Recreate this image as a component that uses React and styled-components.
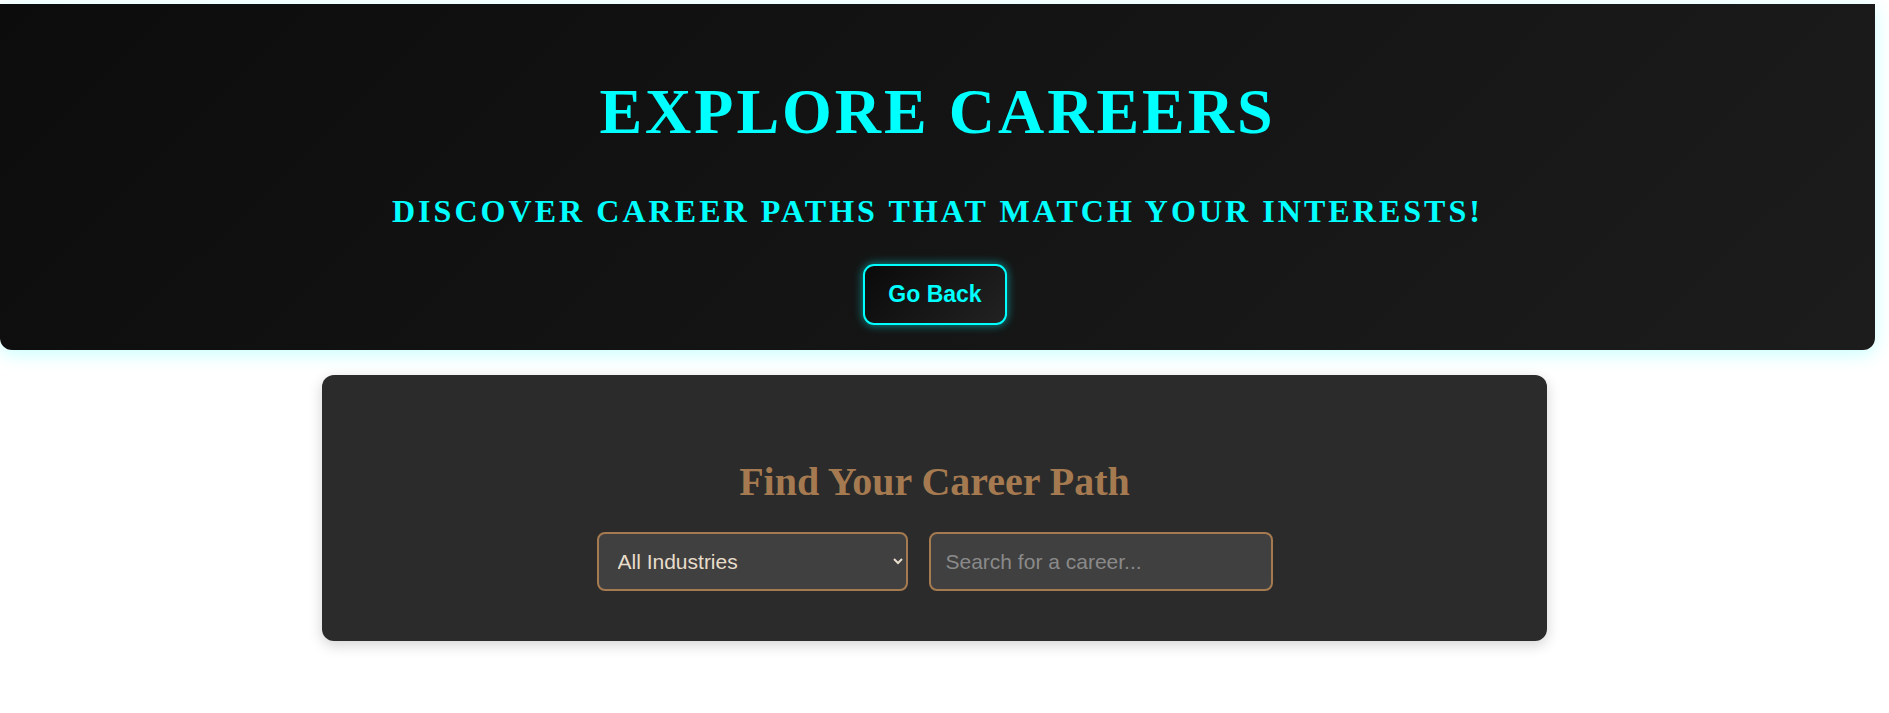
import React from "react";
import styled, { createGlobalStyle } from "styled-components";

const GlobalStyle = createGlobalStyle`
  * {
    box-sizing: border-box;
  }

  body {
    margin: 0;
    background: #ffffff;
    font-family: "Liberation Serif", "Times New Roman", serif;
  }
`;

const Page = styled.div`
  min-height: 100vh;
  padding: 4px 14px 40px 0;
  display: flex;
  flex-direction: column;
  align-items: center;
  gap: 25px;
`;

// Hero header
const Header = styled.header`
  width: 100%;
  height: 346px;
  padding-top: 71px;
  display: flex;
  flex-direction: column;
  align-items: center;
  background: linear-gradient(135deg, #0c0c0c 0%, #1c1c1c 100%);
  border-radius: 0 0 12px 12px;
  box-shadow: 0 4px 18px rgba(0, 255, 255, 0.22);
`;

const Title = styled.h1`
  margin: 0;
  font-family: "Liberation Serif", "Times New Roman", serif;
  font-size: 64px;
  font-weight: 700;
  letter-spacing: 3px;
  color: #00ffff;
  text-transform: uppercase;
`;

const Subtitle = styled.h2`
  margin: 44px 0 0;
  font-family: "Liberation Serif", "Times New Roman", serif;
  font-size: 32px;
  font-weight: 700;
  letter-spacing: 3.05px;
  color: #00ffff;
  text-transform: uppercase;
`;

const BackButton = styled.button`
  margin: 34px 5px 0 0;
  padding: 15px 23px;
  font-family: "Liberation Sans", Arial, sans-serif;
  font-size: 23px;
  font-weight: 700;
  color: #00ffff;
  background: linear-gradient(135deg, #0a0a0a, #222222);
  border: 2px solid #00ffff;
  border-radius: 11px;
  box-shadow: 0 0 10px rgba(0, 255, 255, 0.55);
  cursor: pointer;
`;

// Search card
const Card = styled.section`
  width: 1225px;
  height: 266px;
  margin-right: 6px;
  padding-top: 83px;
  display: flex;
  flex-direction: column;
  align-items: center;
  background: #2b2b2b;
  border-radius: 12px;
  box-shadow: 0 4px 14px rgba(0, 0, 0, 0.18);
`;

const CardTitle = styled.h2`
  margin: 0;
  font-family: "Liberation Serif", "Times New Roman", serif;
  font-size: 40px;
  font-weight: 700;
  color: #a57a50;
`;

const Controls = styled.div`
  margin-top: 27px;
  display: flex;
  gap: 21px;
`;

const fieldStyles = `
  height: 59px;
  padding: 0 15px;
  font-family: "Liberation Sans", Arial, sans-serif;
  font-size: 21px;
  color: #e8ddca;
  background: #404040;
  border: 2px solid #a57a50;
  border-radius: 8px;
  outline: none;
`;

const Select = styled.select`
  ${fieldStyles}
  width: 311px;
`;

const SearchInput = styled.input`
  ${fieldStyles}
  width: 344px;

  &::placeholder {
    color: #8a8a8a;
  }
`;

const ExploreCareers = () => {
  return (
    <>
      <GlobalStyle />
      <Page>
        <Header>
          <Title>Explore Careers</Title>
          <Subtitle>Discover career paths that match your interests!</Subtitle>
          <BackButton>Go Back</BackButton>
        </Header>

        <Card>
          <CardTitle>Find Your Career Path</CardTitle>
          <Controls>
            <Select defaultValue="all">
              <option value="all">All Industries</option>
              <option value="tech">Technology</option>
              <option value="health">Healthcare</option>
              <option value="finance">Finance</option>
              <option value="arts">Arts &amp; Design</option>
            </Select>
            <SearchInput type="text" placeholder="Search for a career..." />
          </Controls>
        </Card>
      </Page>
    </>
  );
};

export default ExploreCareers;
